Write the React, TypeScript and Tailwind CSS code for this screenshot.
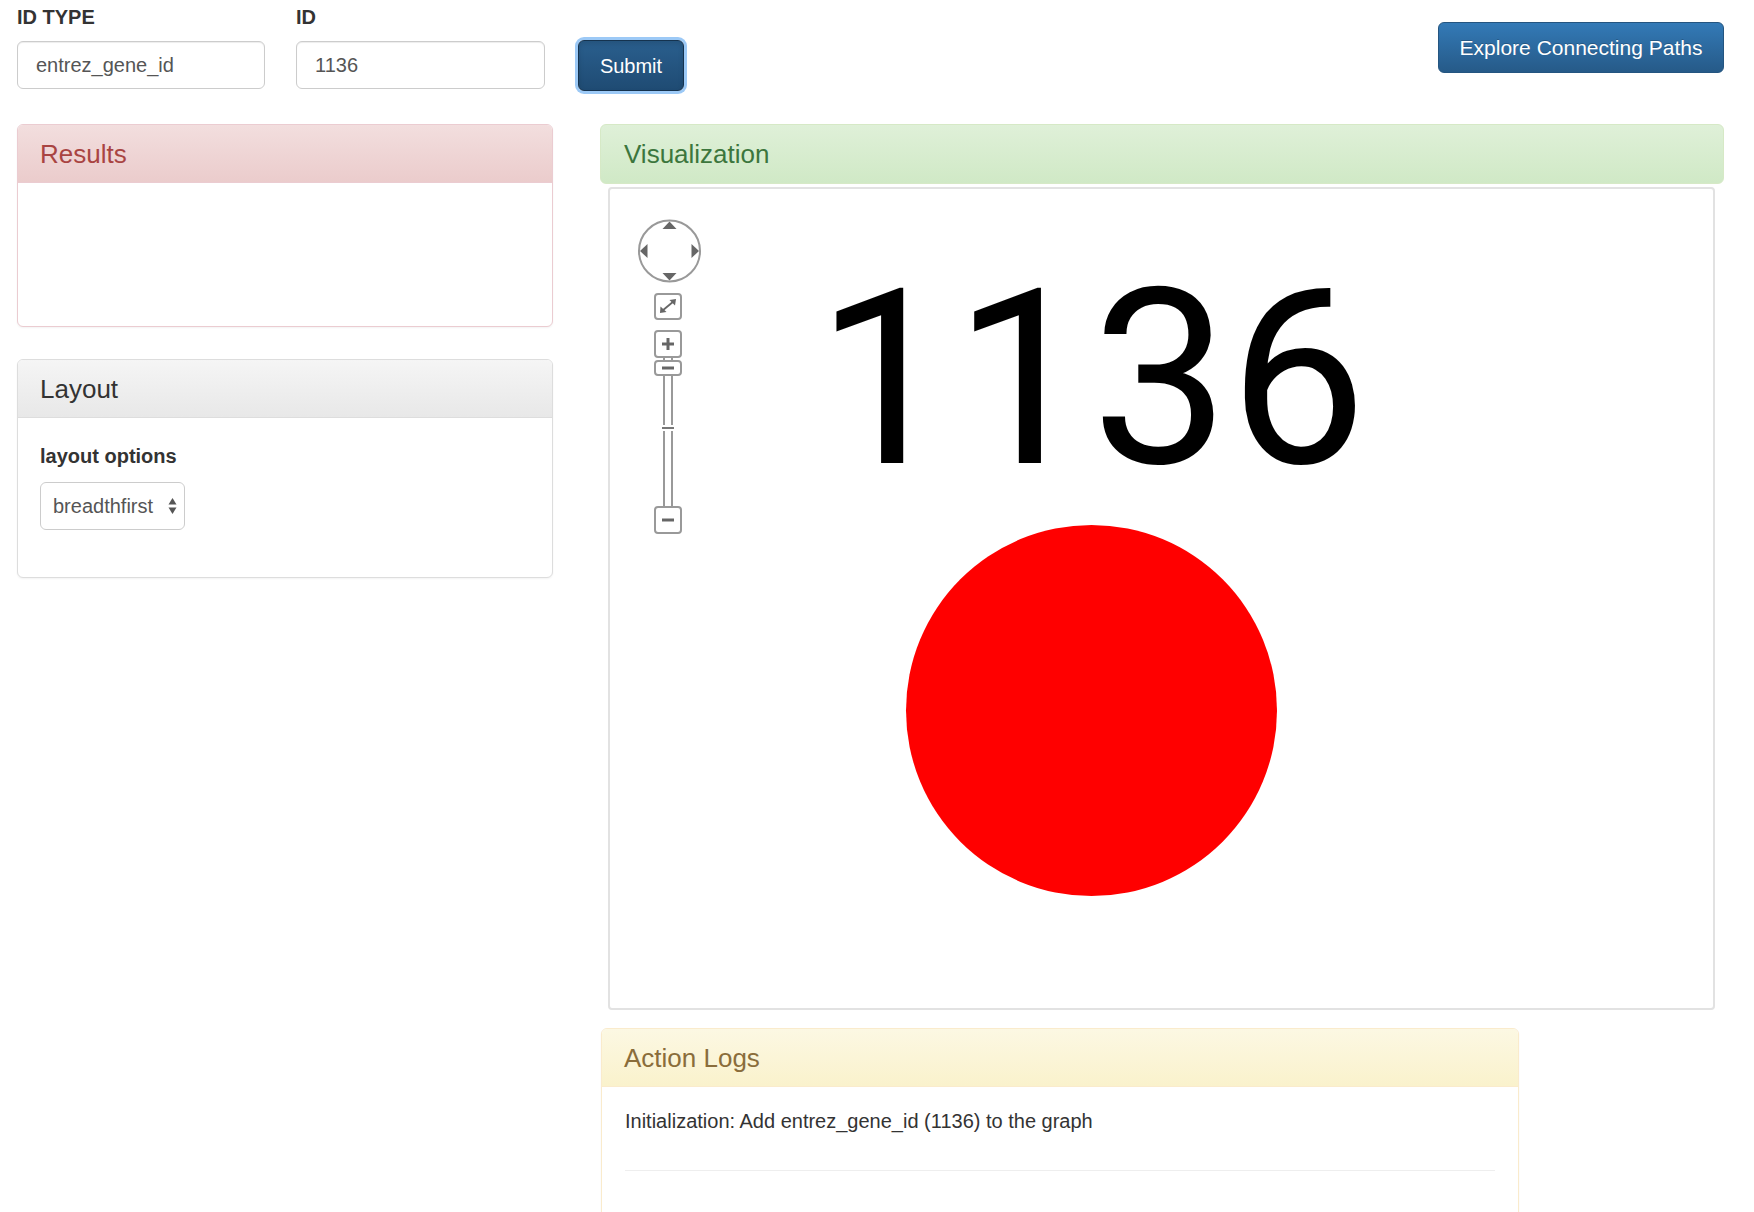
import React from "react";

type Tone = "danger" | "default" | "success" | "warning";

// bootstrap-theme style panel headings
const headingTone: Record<Tone, string> = {
  danger: "bg-linear-to-b from-[#f2dede] to-[#ebcccc] border-[#ebccd1] text-[#a94442]",
  default: "bg-linear-to-b from-[#f5f5f5] to-[#e8e8e8] border-[#dddddd] text-[#333333]",
  success: "bg-linear-to-b from-[#dff0d8] to-[#d0e9c6] border-[#d6e9c6] text-[#3c763d]",
  warning: "bg-linear-to-b from-[#fcf8e3] to-[#faf2cc] border-[#faebcc] text-[#8a6d3b]",
};

const panelBorder: Record<Tone, string> = {
  danger: "border-[#ebccd1]",
  default: "border-[#dddddd]",
  success: "border-[#d6e9c6]",
  warning: "border-[#faebcc]",
};

interface PanelProps {
  title: string;
  tone: Tone;
  className?: string;
  children?: React.ReactNode;
}

const Panel: React.FC<PanelProps> = ({ title, tone, className = "", children }) => (
  <div className={`rounded-[6px] border bg-white overflow-hidden shadow-[0_1px_2px_rgba(0,0,0,0.05)] ${panelBorder[tone]} ${className}`}>
    <div className={`h-[58px] flex items-center px-[22px] border-b ${headingTone[tone]}`}>
      <h3 className="text-[26px] leading-none font-normal">{title}</h3>
    </div>
    {children}
  </div>
);

const Field: React.FC<{ label: string; value: string; width: string }> = ({ label, value, width }) => (
  <div className={`flex flex-col ${width}`}>
    <label className="text-[20px] leading-[28px] font-bold text-[#333] mb-[10px]">{label}</label>
    <div className="h-[48px] rounded-[6px] border border-[#cccccc] shadow-[inset_0_1px_1px_rgba(0,0,0,0.075)] flex items-center px-[18px] text-[20px] text-[#555]">
      {value}
    </div>
  </div>
);

// cytoscape-panzoom style navigator, drawn in page coordinates
const PanZoom = () => (
  <svg
    className="absolute left-[26px] top-[28px]"
    width="68"
    height="320"
    viewBox="636 217 68 320"
    fill="none"
  >
    <circle cx="669.5" cy="251" r="30.5" stroke="#999" strokeWidth="2" fill="#fff" />
    <polygon points="669.5,221.5 662.5,229 676.5,229" fill="#666" />
    <polygon points="669.5,280.5 662.5,273 676.5,273" fill="#666" />
    <polygon points="640,251 647.5,244 647.5,258" fill="#666" />
    <polygon points="699,251 691.5,244 691.5,258" fill="#666" />

    {/* fit */}
    <rect x="655" y="294" width="26" height="25" rx="3" stroke="#999" strokeWidth="2" fill="#fff" />
    <line x1="662" y1="311" x2="674" y2="301" stroke="#666" strokeWidth="1.8" />
    <polygon points="676,299 669.5,300 675,305.5" fill="#666" />
    <polygon points="660,313 660.5,306.5 666.5,312" fill="#666" />

    {/* track */}
    <line x1="664" y1="356" x2="664" y2="425" stroke="#999" strokeWidth="2" />
    <line x1="672" y1="356" x2="672" y2="425" stroke="#999" strokeWidth="2" />
    <line x1="664" y1="431" x2="664" y2="508" stroke="#999" strokeWidth="2" />
    <line x1="672" y1="431" x2="672" y2="508" stroke="#999" strokeWidth="2" />
    <line x1="662" y1="428" x2="674" y2="428" stroke="#777" strokeWidth="2" />

    {/* zoom in */}
    <rect x="655" y="331" width="26" height="26" rx="3" stroke="#999" strokeWidth="2" fill="#fff" />
    <line x1="662" y1="344" x2="674" y2="344" stroke="#666" strokeWidth="3" />
    <line x1="668" y1="338" x2="668" y2="350" stroke="#666" strokeWidth="3" />

    {/* slider handle */}
    <rect x="655" y="361" width="26" height="14" rx="3" stroke="#999" strokeWidth="2" fill="#fff" />
    <line x1="662" y1="368" x2="674" y2="368" stroke="#666" strokeWidth="3" />

    {/* zoom out */}
    <rect x="655" y="507" width="26" height="26" rx="3" stroke="#999" strokeWidth="2" fill="#fff" />
    <line x1="662" y1="520" x2="674" y2="520" stroke="#666" strokeWidth="3" />
  </svg>
);

export default function App() {
  return (
    <div className="w-[1754px] h-[1212px] overflow-hidden bg-white text-[#333] [font-family:'Liberation_Sans',Arial,sans-serif] pl-[17px] pr-[30px] pt-[3px]">
      {/* search bar */}
      <div className="flex items-start justify-between">
        <div className="flex items-start">
          <Field label="ID TYPE" value="entrez_gene_id" width="w-[248px]" />
          <Field label="ID" value="1136" width="w-[249px] ml-[31px]" />
          <button className="ml-[33px] mt-[37px] w-[106px] h-[51px] rounded-[6px] bg-linear-to-b from-[#2a5f8e] to-[#1f4b73] border border-[#15334f] text-white text-[20px] shadow-[inset_0_3px_5px_rgba(0,0,0,0.125),0_0_0_3px_#9cc9f6]">
            Submit
          </button>
        </div>
        <button className="mt-[19px] w-[286px] h-[51px] rounded-[6px] bg-linear-to-b from-[#337ab7] to-[#265a88] border border-[#245580] text-white text-[21px] [text-shadow:0_-1px_0_rgba(0,0,0,0.2)]">
          Explore Connecting Paths
        </button>
      </div>

      <div className="flex items-start mt-[33px]">
        {/* left column */}
        <div className="w-[536px] flex flex-col">
          <Panel title="Results" tone="danger">
            <div className="h-[143px]" />
          </Panel>

          <Panel title="Layout" tone="default" className="mt-[32px]">
            <div className="pt-[24px] px-[22px] pb-[47px]">
              <div className="text-[20px] leading-[28px] font-bold mb-[12px]">layout options</div>
              <div className="w-[145px] h-[48px] rounded-[6px] border border-[#cccccc] flex items-center justify-between pl-[12px] pr-[7px] text-[20px] text-[#555]">
                <span>breadthfirst</span>
                <svg width="9" height="18" viewBox="0 0 9 18">
                  <polygon points="4.5,1 0.5,7.5 8.5,7.5" fill="#555" />
                  <polygon points="4.5,17 0.5,10.5 8.5,10.5" fill="#555" />
                </svg>
              </div>
            </div>
          </Panel>
        </div>

        {/* right column */}
        <div className="flex-1 ml-[47px] flex flex-col">
          <div className="h-[60px] rounded-[6px] border border-[#d6e9c6] bg-linear-to-b from-[#dff0d8] to-[#d0e9c6] flex items-center px-[23px] text-[#3c763d]">
            <h3 className="text-[26px] leading-none font-normal">Visualization</h3>
          </div>

          <div className="relative mt-[3px] ml-[8px] mr-[9px] h-[823px] rounded-[4px] border-2 border-[#e2e2e2] bg-white">
            <PanZoom />
            <div className="absolute left-[206px] top-[68px] [font-family:Roboto,'Liberation_Sans',sans-serif] text-[245px] leading-none text-black whitespace-nowrap">
              1136
            </div>
            <div className="absolute left-[296px] top-[336px] w-[371px] h-[371px] rounded-full bg-[#ff0000]" />
          </div>

          <Panel title="Action Logs" tone="warning" className="mt-[18px] ml-[1px] w-[918px]">
            <div className="pt-[20px] px-[23px] h-[200px]">
              <p className="text-[20px] leading-[28px] text-[#333]">
                Initialization: Add entrez_gene_id (1136) to the graph
              </p>
              <hr className="mt-[35px] border-t border-[#eeeeee]" />
            </div>
          </Panel>
        </div>
      </div>
    </div>
  );
}
